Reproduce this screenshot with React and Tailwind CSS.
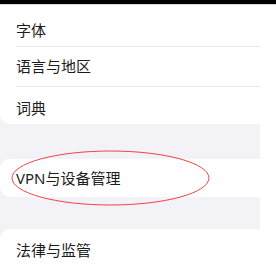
import React from 'react';

function Row({ label, divider, className = '' }) {
    return (
        <div className={`flex flex-col pl-4 ${className}`}>
            <div className="flex-1 flex items-center text-[15px] text-[#1c1c1e]">{label}</div>
            {divider && <div className="h-px bg-[#e5e5ea]" />}
        </div>
    );
}

export default function App() {
    return (
        <div
            className="relative w-[276px] h-[265px] overflow-hidden bg-white"
            style={{ fontFamily: '"Noto Sans", "Noto Sans CJK SC", sans-serif' }}
        >
            {/* status strip */}
            <div className="h-[4px] bg-black" />
            <div className="h-px bg-[#d8d8dc]" />

            <div className="w-[260px] h-[260px] bg-[#f2f2f7]">
                {/* first group */}
                <div className="bg-white rounded-bl-[10px]">
                    <Row label="字体" divider className="h-[42px] pt-[9px]" />
                    <Row label="语言与地区" divider className="h-[40px]" />
                    <Row label="词典" className="h-[37px] pt-[5px]" />
                </div>

                {/* VPN group */}
                <div className="mt-[35px] bg-white rounded-l-[10px] h-[38px] flex items-center pl-4 text-[15px] text-[#1c1c1e]">
                    VPN与设备管理
                </div>

                {/* legal group */}
                <div className="mt-[32px] bg-white rounded-tl-[10px] h-[60px] pl-4 pt-[10px] text-[15px] text-[#1c1c1e]">
                    法律与监管
                </div>
            </div>

            {/* annotation ellipse */}
            <svg className="absolute left-0 top-0 pointer-events-none" width="276" height="265">
                <ellipse cx="110.5" cy="178" rx="98.5" ry="27" fill="none" stroke="#ef4444" strokeWidth="1" />
            </svg>
        </div>
    );
}
